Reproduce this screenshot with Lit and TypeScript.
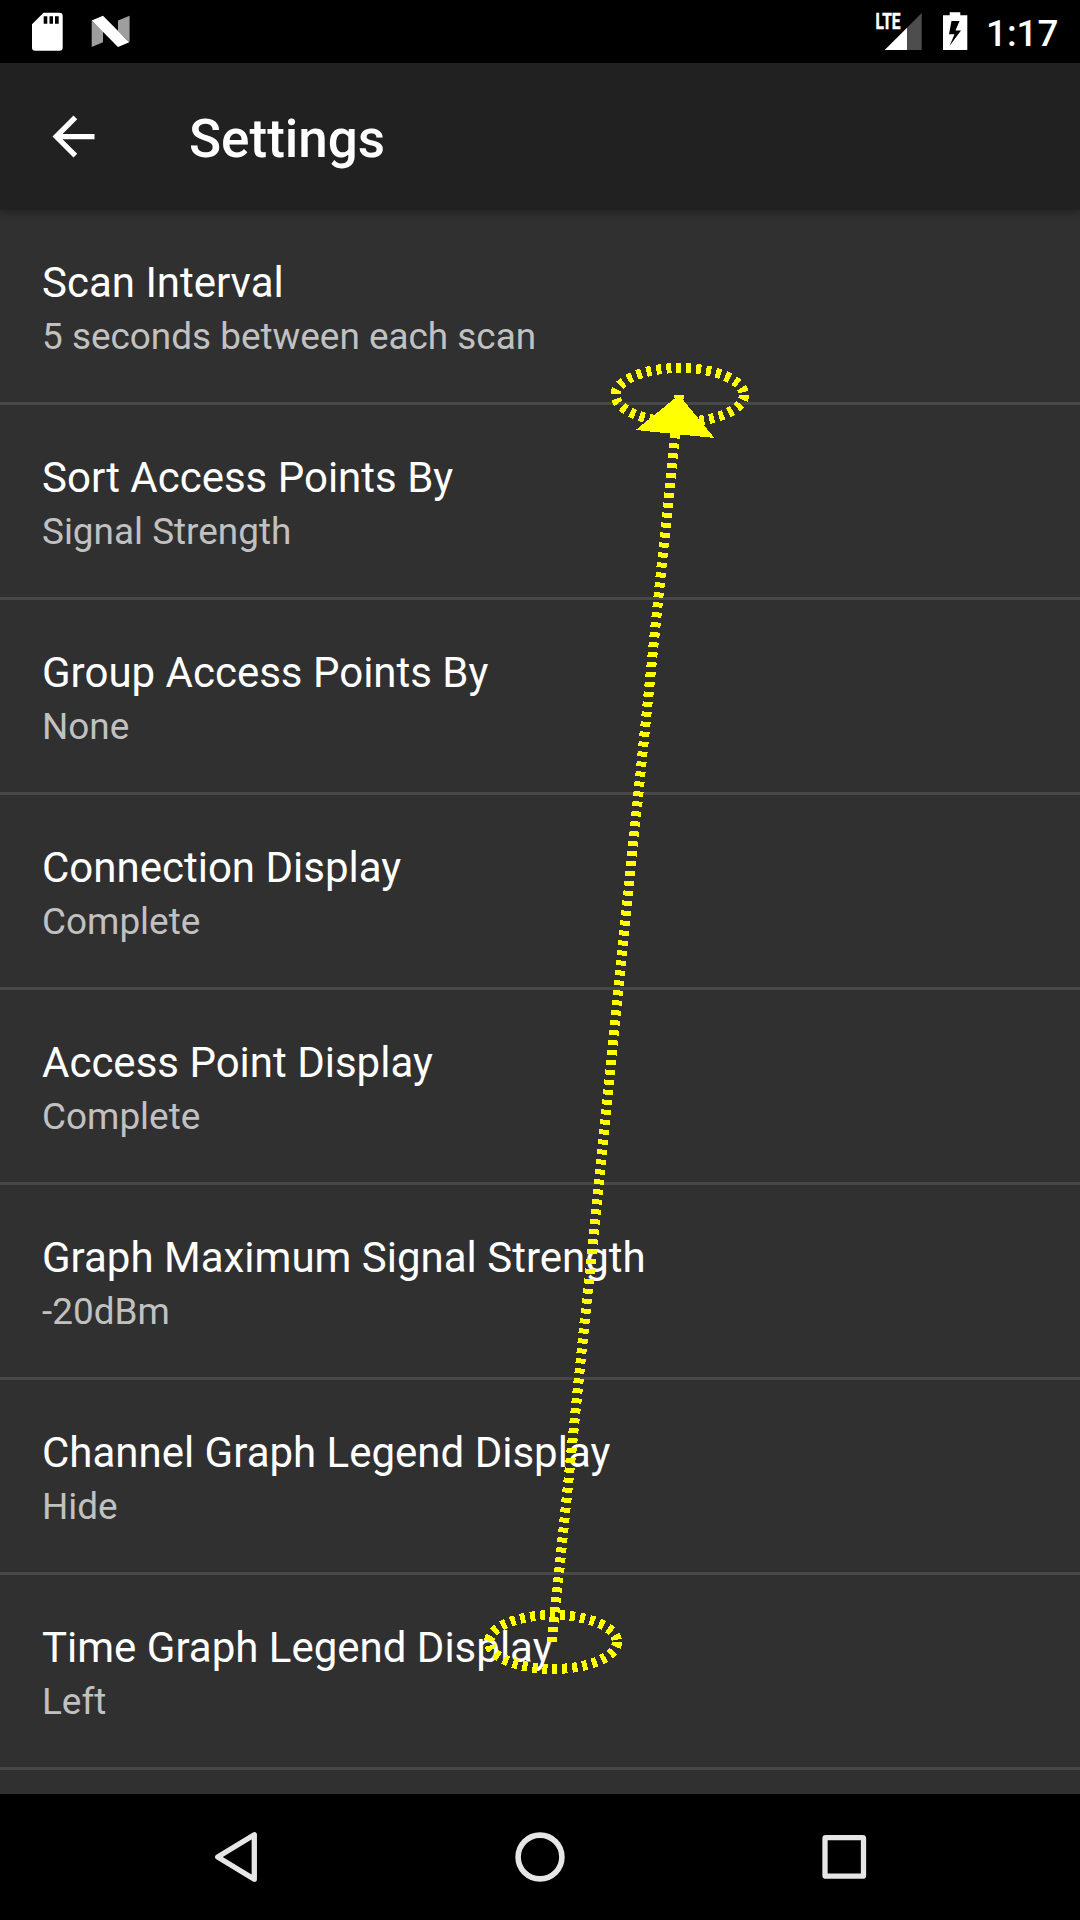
import { LitElement, html, css } from "lit";
import { customElement, property } from "lit/decorators.js";

@customElement("status-bar")
class StatusBar extends LitElement {
  static styles = css`
    :host { display: flex; justify-content: space-between; height: 63px; background: #000; color: #fff; font-family: Roboto, sans-serif; }
    .group { display: flex; height: 63px; }
    .icon { display: block; }
    .clock { width: 94px; padding-top: 2px; font-size: 36.75px; line-height: 63px; font-weight: 500; white-space: nowrap; }
    .lte { font: 700 22px Roboto, sans-serif; fill: #fff; stroke: #fff; stroke-width: 0.5px; }
  `;
  render() {
    return html`
      <div class="group">
        <svg class="icon" width="160" height="63" viewBox="0 0 160 63">
          <path fill="#fff" fill-rule="evenodd" d="M43.500 12.800H59.500Q62.700 12.800 62.700 16V47.500Q62.700 50.700 59.500 50.700H35.200Q32 50.700 32 47.500V24.300ZM43.700 16.300V23.700H47.300V16.300ZM49.500 16.300V23.700H53V16.300ZM55 16.300V23.700H58.700V16.300Z" />
          <path fill="#9e9e9e" d="M91.700 20.500L103 31.500V42.300L91.700 47ZM118 20.500L129.600 15.800V42L118 31Z" />
          <path fill="#fff" d="M91.700 20.500L103 15.800L129.300 42.200L118 47Z" />
        </svg>
      </div>
      <div class="group">
        <svg class="icon" width="116" height="63" viewBox="870 0 116 63">
          <path fill="#4d4d4d" d="M907 27.700L921.700 13V50H907Z" />
          <path fill="#fff" d="M884.700 50L907 27.700V50Z" />
          <text class="lte" x="875.500" y="29" textLength="25" lengthAdjust="spacingAndGlyphs">LTE</text>
          <path fill="#fff" fill-rule="evenodd" d="M949.700 12.300H960.300V15.300H967.300V50H943V15.300H949.700ZM951.500 21L949 34.300H954.500L949.500 46L961 30.500H955.500L959.500 21Z" />
        </svg>
        <div class="clock">1:17</div>
      </div>`;
  }
}

@customElement("app-bar")
class AppBar extends LitElement {
  @property() heading = "";
  static styles = css`
    :host { display: flex; align-items: center; height: 147px; padding-left: 42px; gap: 84px; background: #212121; color: #fff; box-shadow: 0 3px 8px rgba(0, 0, 0, 0.3); position: relative; font-family: Roboto, sans-serif; }
    .back { display: block; }
    .heading { font-size: 53px; font-weight: 500; line-height: 62px; padding-top: 4px; }
  `;
  render() {
    return html`
      <svg class="back" width="63" height="63" viewBox="0 0 24 24"><path fill="#fff" d="M20 11H7.830l5.590-5.590L12 4l-8 8 8 8 1.410-1.410L7.830 13H20z" /></svg>
      <div class="heading">${this.heading}</div>`;
  }
}

@customElement("setting-row")
class SettingRow extends LitElement {
  @property() name = "";
  @property() value = "";
  static styles = css`
    :host { display: flex; flex-direction: column; box-sizing: border-box; height: 195px; padding: 48px 42px 0; border-bottom: 3px solid #484848; font-family: Roboto, sans-serif; white-space: nowrap; }
    .name { color: #fff; font-size: 42px; line-height: 50px; }
    .value { color: #c1c1c1; font-size: 36.9px; line-height: 44px; margin-top: 7px; }
  `;
  render() {
    return html`<div class="name">${this.name}</div><div class="value">${this.value}</div>`;
  }
}

@customElement("nav-bar")
class NavBar extends LitElement {
  static styles = css`
    :host { display: block; height: 126px; background: #000; }
    .keys { display: block; }
  `;
  render() {
    return html`
      <svg class="keys" width="1080" height="126" viewBox="0 1794 1080 126" fill="none" stroke="#e6e6e6" stroke-width="5.300" stroke-linejoin="round">
        <path d="M217.700 1857L254.300 1834.700V1879.300Z" />
        <circle cx="540" cy="1857" r="21.900" stroke-width="5.600" />
        <rect x="825" y="1837.700" width="38.500" height="38.500" rx="0.800" />
      </svg>`;
  }
}

@customElement("gesture-overlay")
class GestureOverlay extends LitElement {
  static styles = css`
    :host { display: block; position: absolute; inset: 0; pointer-events: none; }
    .marks { display: block; }
  `;
  render() {
    return html`
      <svg class="marks" width="1080" height="1920" viewBox="0 0 1080 1920" shape-rendering="crispEdges" fill="none" stroke="#ff0" stroke-width="10" stroke-dasharray="5 5">
        <ellipse cx="553" cy="1642" rx="64" ry="27" />
        <ellipse cx="679.700" cy="395" rx="64.200" ry="27" />
        <path d="M552 1642L679 395" />
        <path d="M635.700 430L679 395L714.500 438Z" fill="#ff0" stroke="none" />
      </svg>`;
  }
}

const SETTINGS: [string, string][] = [
  ["Scan Interval", "5 seconds between each scan"],
  ["Sort Access Points By", "Signal Strength"],
  ["Group Access Points By", "None"],
  ["Connection Display", "Complete"],
  ["Access Point Display", "Complete"],
  ["Graph Maximum Signal Strength", "-20dBm"],
  ["Channel Graph Legend Display", "Hide"],
  ["Time Graph Legend Display", "Left"],
];

@customElement("app-root")
class AppRoot extends LitElement {
  static styles = css`
    :host { display: flex; flex-direction: column; position: relative; width: 1080px; height: 1920px; overflow: hidden; background: #303030; }
    .list { flex: 1; min-height: 0; overflow: hidden; }
  `;
  render() {
    return html`
      <status-bar></status-bar>
      <app-bar heading="Settings"></app-bar>
      <div class="list">${SETTINGS.map(([n, v]) => html`<setting-row .name=${n} .value=${v}></setting-row>`)}</div>
      <nav-bar></nav-bar>
      <gesture-overlay></gesture-overlay>`;
  }
}
